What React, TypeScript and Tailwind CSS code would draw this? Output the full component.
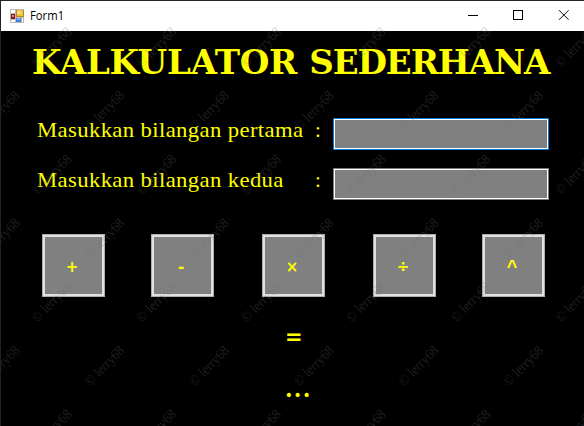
// Staggered tiles: odd rows are shifted left by half a tile.
const marks: { x: number; y: number }[] = [];
for (let row = 0; row < 7; row++) {
  for (let col = 0; col < 6; col++) {
    marks.push({ x: (row % 2 ? -14.5 : 37.5) + col * 104.7, y: 59.5 + row * 63.75 });
  }
}

function FormIcon() {
  return (
    <svg width="14" height="14" viewBox="0 0 14 14" shapeRendering="crispEdges">
      <rect width="14" height="14" fill="#b9b9b9" />
      <rect x="1" y="1" width="4" height="3" fill="#fff" />
      <rect x="1" y="11" width="4" height="2" fill="#fff" />
      <rect x="6" y="1" width="8" height="7" fill="#b8862b" />
      <rect x="7" y="1" width="6" height="6" fill="#f6c23c" />
      <rect x="7" y="2" width="4" height="3" fill="#fbdc82" />
      <rect x="1" y="5" width="4" height="5" fill="#8f1712" />
      <rect x="2" y="6" width="2" height="2" fill="#e08a80" />
      <rect x="6" y="9" width="5" height="4" fill="#3c7be0" />
      <rect x="7" y="9" width="3" height="2" fill="#84b3f7" />
      <rect x="12" y="9" width="1" height="4" fill="#fff" />
    </svg>
  );
}

function TitleBar() {
  return (
    <header className="flex h-[31px] items-center border-t border-[#29252b] bg-white pl-[9px]">
      <FormIcon />
      <span className="ml-[6px] inline-block w-[36px] origin-left scale-x-[0.94] text-[12px] leading-[16px] text-black">Form1</span>
      <svg className="ml-auto mr-[14px]" width="102" height="12" viewBox="0 0 102 12" fill="none" stroke="#000">
        <path d="M0 5.5h10" />
        <rect x="45.5" y="0.5" width="9" height="9" />
        <path d="M91 0.2l9.6 9.6M100.6 0.2L91 9.8" />
      </svg>
    </header>
  );
}

function Field({ label, focused }: { label: string; focused?: boolean }) {
  return (
    <div className="flex h-8 items-center">
      <label className="mb-[8px] flex w-[296px] font-['Liberation_Serif',serif] text-[21px] leading-[24px]">
        <span className="w-[278px] whitespace-nowrap">
          <span className="inline-block origin-left scale-x-[1.08] tracking-[0.35px]">{label}</span>
        </span>
        <span>:</span>
      </label>
      <input
        className={
          focused
            ? "h-8 w-[216px] border border-[#0078d7] bg-[#808080] shadow-[inset_0_0_0_1px_#fff] outline-none"
            : "h-8 w-[216px] border border-[#7a7a7a] bg-[#808080] shadow-[inset_0_0_0_1px_#fff] outline-none"
        }
      />
    </div>
  );
}

function Operator({ symbol }: { symbol: string }) {
  return (
    <button className="flex size-[63px] items-center justify-center border border-[#adadad] bg-[#808080] pr-[3px] pt-[3px] font-['DejaVu_Sans',sans-serif] text-[15px] font-bold leading-none shadow-[inset_0_0_0_2px_#e1e1e1]">
      {symbol === "^" ? <span className="font-['Liberation_Sans',sans-serif] text-[18px] leading-none">^</span> : symbol}
    </button>
  );
}

function Watermark() {
  return (
    <svg className="pointer-events-none absolute inset-0" width="584" height="426" viewBox="0 0 584 426">
      <g fill="#6c6c6c" fillOpacity="0.3" fontFamily="Liberation Serif, serif" fontSize="14.5">
        {marks.map(({ x, y }) => (
          <text key={x + "-" + y} transform={`translate(${x} ${y}) rotate(-45)`} x="-7" y="5" textLength="50" lengthAdjust="spacingAndGlyphs">
            © lerry68
          </text>
        ))}
      </g>
    </svg>
  );
}

export default function App() {
  return (
    <div className="relative h-[426px] w-[584px] overflow-hidden border-l border-[#222] bg-black font-['Open_Sans',sans-serif] text-[#ff0]">
      <TitleBar />
      <main className="flex flex-col">
        <h1 className="mt-[10px] h-[42px] whitespace-nowrap pl-[31px] font-['DejaVu_Serif',serif] text-[34px] font-bold leading-[42px] tracking-[-1.12px]">
          <span className="tracking-[-0.3px]">KALKULATOR</span>
          <span className="[word-spacing:1.5px]"> SEDERHANA</span>
        </h1>
        <section className="mt-[35px] flex flex-col gap-[18px] pl-[36px]">
          <Field label="Masukkan bilangan pertama" focused />
          <Field label="Masukkan bilangan kedua" />
        </section>
        <section className="mt-[34px] flex pl-[41px]">
          <Operator symbol="+" />
          <div className="w-[46px]" />
          <Operator symbol="-" />
          <div className="w-[48px]" />
          <Operator symbol="×" />
          <div className="w-[48px]" />
          <Operator symbol="÷" />
          <div className="w-[46px]" />
          <Operator symbol="^" />
        </section>
        <output className="mt-[23px] flex flex-col font-['DejaVu_Sans',sans-serif] font-bold">
          <span className="pl-[284px] text-[21px] leading-[34px]">=</span>
          <span className="mt-[18px] pl-[284px] font-['DejaVu_Serif',serif] text-[22px] leading-[34px] tracking-[1.2px]">...</span>
        </output>
      </main>
      <Watermark />
    </div>
  );
}
